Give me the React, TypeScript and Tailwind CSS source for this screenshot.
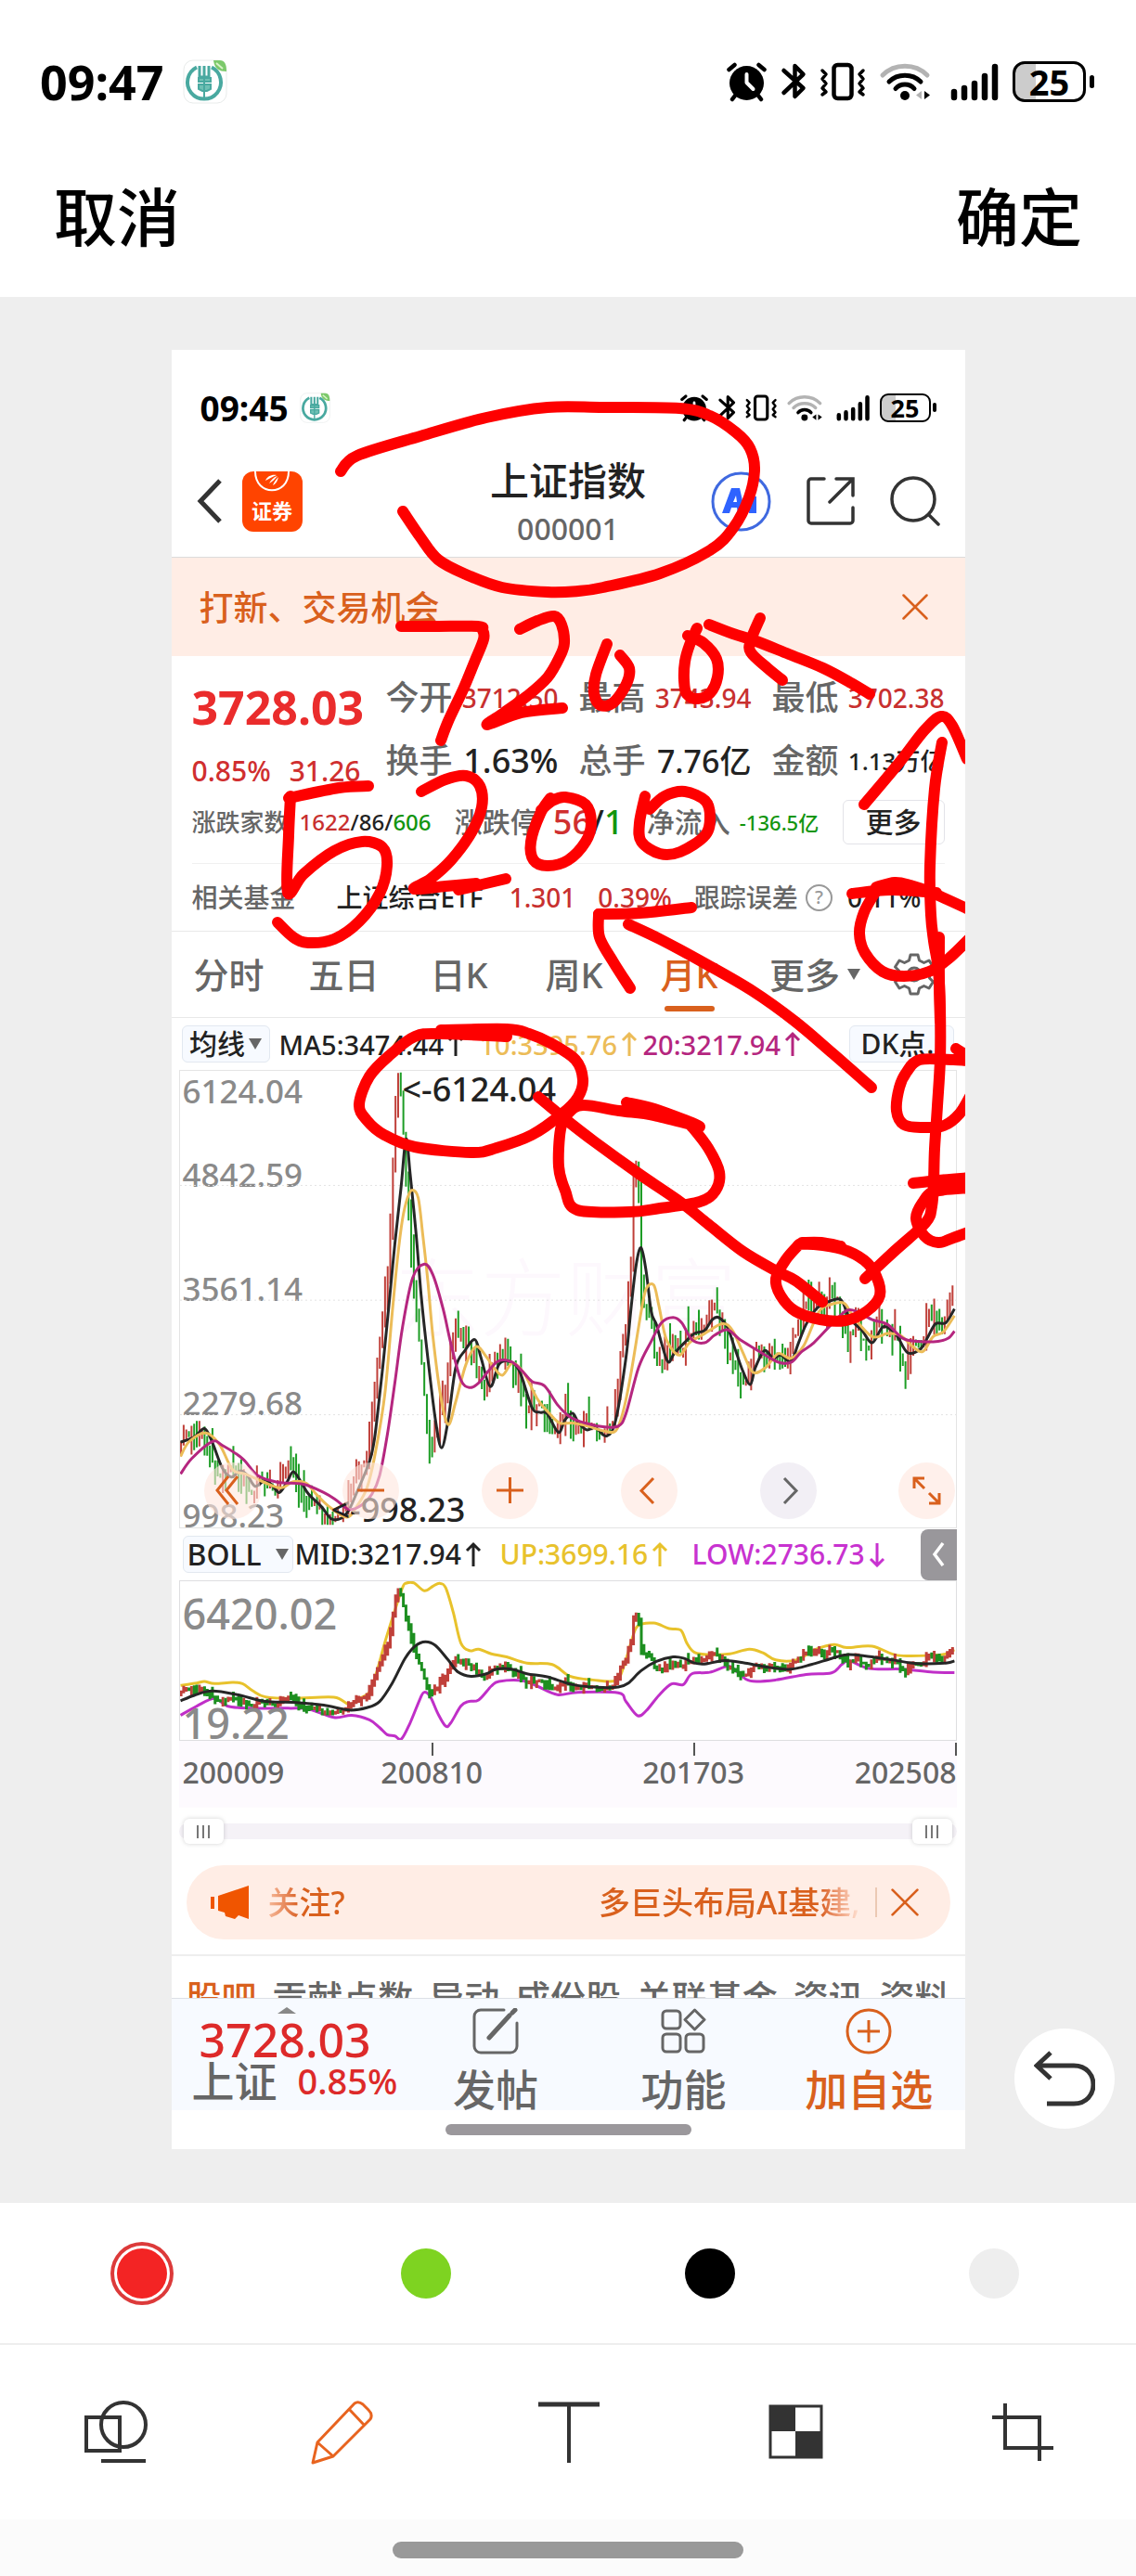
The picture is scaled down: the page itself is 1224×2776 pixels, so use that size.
import React, { useState } from "react";

type Point = [number, number];

const parse = (s: string): Point[] =>
  s.trim().split(/\s+/).map((pair) => pair.split(",").map(Number) as Point);

/* Catmull-Rom spline through the points, written as cubic segments. */
function smooth(points: Point[]): string {
  let d = `M${points[0][0]} ${points[0][1]}`;
  for (let i = 0; i < points.length - 1; i++) {
    const p0 = points[Math.max(0, i - 1)];
    const p1 = points[i];
    const p2 = points[i + 1];
    const p3 = points[Math.min(points.length - 1, i + 2)];
    d += ` C${(p1[0] + (p2[0] - p0[0]) / 6).toFixed(1)} ${(p1[1] + (p2[1] - p0[1]) / 6).toFixed(1)} ${(p2[0] - (p3[0] - p1[0]) / 6).toFixed(1)} ${(p2[1] - (p3[1] - p1[1]) / 6).toFixed(1)} ${p2[0]} ${p2[1]}`;
  }
  return d;
}

/* ---------- market data ---------- */

const PRICE = parse(
  "18,680 40,640 62,620 80,700 100,790 130,750 160,840 180,790 212,840 235,750 255,820 290,880 312,925 335,915 352,870 370,780 390,720 402,540 415,350 425,200 435,50 445,-330 449,-525 455,-525 460,-380 467,-180 475,0 485,200 500,440 514,720 530,640 545,480 560,320 580,320 600,380 618,520 638,400 660,400 685,460 710,580 730,560 762,650 778,560 800,650 820,600 855,655 875,590 890,400 905,220 913,-50 918,-250 923,-240 929,100 938,280 948,230 960,440 985,370 1010,350 1030,310 1050,300 1078,240 1090,320 1110,420 1138,500 1150,350 1175,410 1200,370 1215,430 1235,300 1260,230 1300,200 1320,210 1338,360 1355,290 1375,380 1400,270 1425,330 1450,420 1465,350 1485,380 1495,240 1520,310 1542,190",
);
const MA5 = parse(
  "18,672 45,655 65,628 80,670 100,755 118,785 135,765 150,780 165,815 185,795 200,815 213,835 228,800 240,768 255,800 270,840 295,880 315,920 335,918 350,890 365,835 390,735 400,660 410,520 418,400 430,200 440,30 452,-150 462,-310 470,-200 482,0 492,200 505,400 520,600 532,690 545,600 560,430 578,375 598,340 610,400 628,492 645,420 665,410 685,440 710,560 725,575 740,580 762,640 775,600 790,578 802,610 818,632 835,625 857,652 875,600 895,400 905,240 915,100 925,42 935,120 945,250 955,290 965,350 978,412 990,385 1010,350 1030,320 1050,310 1065,275 1078,268 1095,300 1110,370 1125,440 1140,485 1150,430 1168,375 1185,400 1200,390 1220,410 1235,350 1250,290 1270,240 1290,220 1318,210 1335,270 1360,310 1380,350 1400,300 1415,305 1430,330 1450,382 1475,370 1490,330 1505,288 1525,285 1542,240",
);
const MA10 = parse(
  "18,718 35,670 68,642 95,680 120,760 145,775 180,800 215,820 240,800 265,805 285,840 310,880 345,915 365,880 385,820 400,720 420,520 435,250 445,80 455,-50 465,-120 474,-145 486,-120 495,0 505,150 515,330 530,520 545,615 560,540 580,420 600,362 620,395 635,430 652,455 672,415 695,450 720,530 745,580 765,610 790,610 820,620 850,635 875,635 890,570 905,450 925,250 935,175 950,163 960,230 975,340 1000,390 1020,350 1050,320 1085,288 1105,310 1125,380 1145,445 1170,430 1195,385 1220,400 1245,360 1275,250 1300,225 1325,222 1345,270 1380,330 1410,320 1435,325 1460,362 1480,378 1500,330 1520,315 1542,262",
);
const MA20 = parse(
  "18,775 40,725 80,670 100,682 140,725 170,780 210,802 260,808 300,835 325,860 350,890 375,875 395,840 410,780 425,650 440,480 455,300 475,140 498,95 515,130 535,240 550,350 570,470 588,495 605,480 625,440 645,408 670,412 690,440 710,475 735,490 760,550 785,590 815,610 850,622 880,620 895,580 920,430 945,345 965,285 988,268 1005,285 1025,340 1050,350 1070,325 1095,308 1120,340 1150,370 1180,400 1200,415 1222,412 1240,380 1265,350 1300,290 1330,245 1352,250 1380,275 1410,290 1440,335 1470,345 1510,345 1530,335 1542,312",
);
const BOLL_UP = parse(
  "18,528 50,520 65,515 85,522 120,518 140,522 160,545 185,565 240,570 320,566 350,590 370,570 390,550 405,480 420,390 435,310 455,210 463,195 478,195 498,220 515,205 528,196 540,210 555,290 570,390 588,415 605,410 630,425 660,435 700,455 750,460 785,498 830,510 875,512 890,470 905,390 918,335 950,325 980,343 1003,348 1015,390 1030,420 1060,428 1100,425 1138,410 1165,422 1190,445 1230,445 1270,410 1305,395 1330,405 1380,400 1430,430 1500,430 1525,425 1542,412",
);
const BOLL_MID = parse(
  "18,578 45,560 80,546 130,558 185,580 240,583 300,592 350,608 385,600 410,580 435,520 460,440 480,400 500,386 520,398 545,445 565,485 590,498 620,490 640,475 670,475 700,490 740,500 790,525 840,534 880,533 900,520 925,480 955,450 988,435 1010,440 1030,455 1050,458 1090,447 1130,455 1180,470 1220,475 1260,460 1300,440 1330,428 1365,432 1420,445 1470,457 1525,455 1542,448",
);
const BOLL_LOW = parse(
  "18,625 50,595 85,570 110,595 150,602 230,602 270,605 320,632 355,625 390,640 410,665 425,688 440,692 453,702 470,650 490,570 498,550 510,565 525,620 540,660 550,650 570,595 585,580 605,575 630,530 645,515 690,512 720,530 760,558 800,550 880,552 895,580 918,626 935,610 960,560 985,523 1008,525 1025,490 1060,485 1097,465 1115,485 1140,513 1190,510 1250,492 1300,487 1320,460 1335,448 1375,473 1440,475 1500,485 1542,486",
);

function priceAt(x: number): number {
  for (let i = 1; i < PRICE.length; i++) {
    if (x <= PRICE[i][0]) {
      const [x0, y0] = PRICE[i - 1];
      const [x1, y1] = PRICE[i];
      return y0 + ((y1 - y0) * (x - x0)) / (x1 - x0);
    }
  }
  return PRICE[PRICE.length - 1][1];
}

const noise = (i: number) => {
  const v = Math.sin(i * 127.1 + 11.7) * 43758.5453;
  return v - Math.floor(v);
};

const CANDLES = Array.from({ length: 296 }, (_, i) => {
  const x = 19 + i * 5.15;
  const wobble = x < 400 ? 26 : 56;
  const open = priceAt(x) + (noise(i) - 0.5) * wobble;
  const close = priceAt(x + 5.15) + (noise(i + 1) - 0.5) * wobble;
  const low = Math.min(940, Math.max(open, close) + 3 + noise(i + 500) ** 3 * 80);
  const high = Math.max(-528, Math.min(open, close) - 3 - noise(i + 900) ** 3 * 80);
  return { x, open, close, low, high, up: close < open };
});
const toBoll = (v: number) => 419.5 + (v - 212) * 0.2784;

const candlePath = (up: boolean) =>
  CANDLES.filter((c) => c.up === up)
    .map((c) => `M${c.x.toFixed(1)} ${c.high.toFixed(0)}V${c.low.toFixed(0)}`)
    .join("");
const bollPath = (up: boolean) =>
  CANDLES.filter((c) => c.up === up)
    .map((c) => `M${c.x.toFixed(1)} ${(toBoll(c.high) - 3).toFixed(1)}V${(toBoll(c.low) + 3).toFixed(1)}`)
    .join("");

/* ---------- handwriting ---------- */

const STROKES: string[] = [
  "367,508 385,491 453,470 524,450 590,439 650,439 732,440 765,448 793,466 808,483 813,506 807,536 790,569 765,593 711,618 650,633 623,637 590,638 541,633 502,619 472,603 453,579 434,551",
  "432,675 470,675 515,675 520,679 521,689 511,714 499,743 483,777 475,798",
  "560,678 579,669 597,664 605,673 608,693 603,708 590,730 568,750 543,768 525,781 562,768 606,763",
  "654,694 642,727 640,747 647,760 661,757 675,737 678,720 668,706",
  "751,677 743,695 738,713 737,733 740,748 752,753 765,747 773,730 772,710 758,693 741,685",
  "764,673 790,683 815,691 850,705 887,720 917,736 937,748",
  "819,666 809,690 809,703 827,720 843,733",
  "397,847 365,849 311,860",
  "313,858 311,900 310,962 327,942 360,917 390,907 412,913 417,933 409,963 387,993 360,1012 332,1016 316,1010 299,994",
  "454,853 480,840 502,836 517,847 519,870 508,897 486,927 464,947 446,958 480,955 513,952",
  "494,959 545,947",
  "593,860 582,877 572,907 575,927 590,933 612,927 631,907 637,887 631,867 609,859 595,863 583,873",
  "695,858 689,887 691,907 711,920 733,918 760,900 765,880 760,863 738,853 716,858 700,872",
  "745,978 689,984 645,985",
  "645,985 646,1010 661,1037 679,1065",
  "677,996 711,1012 761,1039 811,1068 857,1101 897,1135 939,1172",
  "931,867 968,823 996,787 1014,772 1026,782 1042,818",
  "1015,800 1007,850 1002,933 1003,986 1006,1014 1011,1045 1013,1086 1013,1141 1010,1192 1007,1238 1006,1272 1004,1300 997,1318 964,1348 932,1378",
  "1012,1010 1012,1060 1013,1100",
  "918,963 960,959 1009,962",
  "944,956 964,951 981,954 1004,962 1046,981",
  "944,960 931,983 926,1006 932,1027 951,1047 974,1052 1001,1047 1021,1034 1046,1010",
  "1030,1130 1046,1142 1027,1142 991,1142 977,1155 969,1172 966,1197 974,1212 994,1215 1017,1213 1034,1200 1046,1180",
  "984,1275 1011,1272 1046,1269",
  "1046,1280 1007,1284 994,1296 987,1313 996,1332 1011,1339 1027,1334 1046,1327",
  "861,1341 847,1357 836,1378 841,1396 857,1413 884,1422 911,1423 934,1413 948,1396 944,1375 931,1358 907,1346 877,1341 861,1341",
  "864,1339 885,1339 906,1343",
  "580,1182 609,1206 640,1230 690,1266 734,1296 764,1320 801,1349 837,1370 857,1380 886,1403",
  "475,1110 546,1109 570,1114 595,1125 620,1142 628,1163 623,1182 606,1200 573,1223 535,1237 508,1242 447,1236 414,1223 395,1207 387,1190 398,1160 420,1137 447,1117 475,1114 546,1117",
  "675,1188 705,1195 754,1214 705,1202 667,1197 628,1191 612,1200 604,1217 602,1257 609,1283 622,1304 678,1306 711,1302 754,1295 771,1283 775,1263 763,1237 743,1211",
];

function Handwriting() {
  return (
    <svg
      aria-hidden="true"
      viewBox="185 377 855 1939"
      preserveAspectRatio="none"
      className="pointer-events-none absolute inset-0 h-full w-full"
      fill="none"
      stroke="#fe0000"
      strokeWidth="12"
      strokeLinecap="round"
      strokeLinejoin="round"
    >
      {STROKES.map((s) => (
        <path key={s} d={smooth(parse(s))} />
      ))}
    </svg>
  );
}

/* ---------- status bar ---------- */

function LeafBankIcon({ className }: { className: string }) {
  return (
    <svg viewBox="0 0 48 48" className={className} aria-hidden="true">
      <rect x="1" y="1" width="46" height="46" rx="10" fill="#fff" stroke="#e8ebea" />
      <path d="M15 8.500A18 18 0 1 0 31 8.500" fill="none" stroke="#49a9a0" strokeWidth="4" />
      <path d="M18 7v12h10V7M23 7v12" fill="none" stroke="#49a9a0" strokeWidth="3" />
      <path d="M23 20v22M17 20h13v4H17zM17 27h13v5l-4 2h-5l-4-2z" fill="#6fc0b4" stroke="#49a9a0" strokeWidth="2" />
      <path d="M33 1h7c5 0 7 4 7 12-8 0-13-3-14-12z" fill="#7cc96b" />
      <path d="M36 4l7 6" stroke="#d9f3c8" strokeWidth="2" />
    </svg>
  );
}

function SignalIcons({ className, weakWifi }: { className: string; weakWifi?: boolean }) {
  return (
    <svg viewBox="0 0 294 44" className={className} fill="none" strokeLinecap="round" strokeLinejoin="round" aria-hidden="true">
      <circle cx="21.500" cy="23.500" r="18.500" fill="#000" />
      <path d="M21.500 14v9l7 7" stroke="#fff" strokeWidth="4" />
      <path d="M2.500 9l6-5M34.500 4l6 5M9 37l-3 4M34 37l3 4" stroke="#000" strokeWidth="4.500" />
      <path d="M61.500 10l21 19-9 9V5l9 9-21 20" stroke="#000" strokeWidth="4.500" />
      <rect x="115.500" y="4" width="19" height="36" rx="4" stroke="#000" strokeWidth="4.500" />
      <path d="M103 10l4 4-4 5 4 5-4 5 4 4-4 3M147 10l-4 4 4 5-4 5 4 5-4 4 4 3" stroke="#000" strokeWidth="3.500" />
      <path d="M168 15c13-13 35-13 48 0" stroke="#b3b3b3" strokeWidth="5" />
      <path d="M175 22c9-9 25-9 34 0" stroke={weakWifi ? "#b3b3b3" : "#000"} strokeWidth="5" />
      <path d="M182 29.500c5-6 15-6 20 0" stroke="#000" strokeWidth="5" />
      <circle cx="192" cy="37" r="5" fill="#000" />
      <path d="M210 32v9l-6-4.500z" fill={weakWifi ? "#000" : "#b3b3b3"} />
      <path d="M213 32v9l6-4.500z" fill="#000" />
      <path d="M245 33v6M256 29v10M267 24v15M278 16v23M289 6v33" stroke="#000" strokeWidth="6.500" />
    </svg>
  );
}

/* ---------- small pieces ---------- */

function Arrow({ down }: { down?: boolean }) {
  return (
    <svg viewBox="0 0 18 28" className="ml-1 h-7 w-[18px] shrink-0" fill="none" stroke="currentColor" strokeWidth="3" role="img" aria-label={down ? "下跌" : "上涨"}>
      <path d={down ? "M9 2v24M2 19l7 7 7-7" : "M9 27V3M2 10l7-7 7 7"} />
    </svg>
  );
}

function Caret() {
  return (
    <svg viewBox="0 0 14 12" className="h-3 w-3.5 shrink-0" aria-hidden="true">
      <path d="M0 0h14L7 12z" fill="#666" />
    </svg>
  );
}

function Cross({ className }: { className: string }) {
  return (
    <svg viewBox="0 0 28 28" className={className} fill="none" stroke="#d9601d" strokeWidth="2.500" strokeLinecap="round" aria-hidden="true">
      <path d="M1.500 1.500l25 25M26.500 1.500l-25 25" />
    </svg>
  );
}

function Stat({ name, value, valueClass }: { name: string; value: string; valueClass: string }) {
  return (
    <div className="flex h-[68px] items-center justify-between">
      <dt className="text-4xl text-[#666]">{name}</dt>
      <dd className={valueClass}>{value}</dd>
    </div>
  );
}

const PERIODS = ["分时", "五日", "日K", "周K", "月K"];
const SECTIONS = ["股吧", "贡献点数", "异动", "成份股", "关联基金", "资讯", "资料"];

const CHART_TOOLS = [
  { label: "跳到最早", d: "M26 15L14 30l12 15M36 15L24 30l12 15" },
  { label: "缩小", d: "M16 30h29" },
  { label: "放大", d: "M16 30h29M30.500 16v28" },
  { label: "前移", d: "M35 17L22 30.500 35 44" },
  { label: "后移", d: "M26 17l13 13.500L26 44", muted: true },
  { label: "全屏", d: "M17 28V17h11M17 17l11 11M44 33v11H33M44 44L33 33" },
];

/* ---------- the stock page ---------- */

function StockHeader() {
  return (
    <header>
      <div className="flex h-[115px] items-center justify-between pt-[9px] pr-[31px] pl-[31px]">
        <div className="flex items-center gap-3">
          <span className="text-[37px] leading-none font-bold text-black">09:45</span>
          <LeafBankIcon className="size-[33px]" />
        </div>
        <div className="flex items-center gap-2.5">
          <SignalIcons className="h-[31px] w-[205px]" weakWifi />
          <div className="flex items-center gap-0.5">
            <span className="flex h-[31px] w-[55px] items-center justify-center rounded-[9px] border-2 border-black bg-linear-to-r from-[#ccc] from-30% to-white to-30% text-[27px] leading-none font-bold">25</span>
            <span className="h-2.5 w-1 rounded bg-black" />
          </div>
        </div>
      </div>
      <div className="grid h-[109px] grid-cols-[1fr_auto_1fr] items-center border-b border-[#dcdcdc] px-[27px] pb-3">
        <div className="flex items-center gap-[22px]">
          <button aria-label="返回">
            <svg viewBox="0 0 27 48" className="h-12 w-[27px]" fill="none" stroke="#333" strokeWidth="5">
              <path d="M25 2L4 24l21 22" />
            </svg>
          </button>
          <button className="relative flex size-[65px] items-end justify-center overflow-hidden rounded-xl bg-[#ff4400] pb-3 text-[22px] leading-none font-bold text-white">
            <svg viewBox="0 0 40 24" className="absolute top-0 left-3 h-6 w-10" fill="none" aria-hidden="true">
              <path d="M2 0c0 27 36 27 36 0" stroke="#fff" strokeWidth="2" />
              <path d="M13 10c2-5 7-7 12-6-5 2-8 4-12 6zM17 13c2-4 5-7 9-8-3 3-5 6-9 8zM21 15c1-3 3-6 6-9-1 4-2 7-6 9z" fill="#fff" />
            </svg>
            证券
          </button>
        </div>
        <h1 className="-my-4 pt-2 text-center text-[42px] leading-[52px] font-medium text-[#222]">
          上证指数
          <span className="block text-[32px] text-[#666]">000001</span>
        </h1>
        <div className="flex items-center justify-end gap-[38px]">
          <button aria-label="AI 助手">
            <svg viewBox="0 0 65 65" className="size-[65px]" fill="none">
              <circle cx="32.500" cy="32.500" r="30.500" stroke="#3f69e0" strokeWidth="3" />
              <path d="M12 45l10-27h9l6 27h-8l-1-6h-6l-2 6zM24 33h4l-1-7z" fill="#2f63ff" fillRule="evenodd" />
              <path d="M45 27v18M45 18v4" stroke="#2f63ff" strokeWidth="8" />
            </svg>
          </button>
          <button aria-label="分享">
            <svg viewBox="0 0 52 52" className="size-[52px]" fill="none" stroke="#333" strokeWidth="3.500" strokeLinecap="round">
              <path d="M19 2H5a3 3 0 0 0-3 3v42a3 3 0 0 0 3 3h42a3 3 0 0 0 3-3V33M32 2h18v18M50 2L25 27" />
            </svg>
          </button>
          <button aria-label="搜索">
            <svg viewBox="0 0 54 54" className="size-[54px]" fill="none" stroke="#333" strokeWidth="3.500" strokeLinecap="round">
              <circle cx="25" cy="25" r="23" />
              <path d="M42 42l10 10" />
            </svg>
          </button>
        </div>
      </div>
    </header>
  );
}

function Quote() {
  return (
    <section className="border-b border-[#e8e8e8]">
      <div className="px-[22px]">
        <div className="grid grid-cols-[209px_1fr]">
          <div className="pt-[23px]">
            <p className="text-[50px] leading-[64px] font-bold text-[#ea2c2c]">3728.03</p>
            <p className="mt-1.5 flex gap-5 text-[30px] leading-[62px] text-[#d02f2f]">
              <span>0.85%</span>
              <span>31.26</span>
            </p>
          </div>
          <dl className="grid grid-cols-3 content-start gap-x-[22px] pt-[11px] leading-none">
            <Stat name="今开" value="3712.50" valueClass="text-[28px] text-[#c8302f]" />
            <Stat name="最高" value="3743.94" valueClass="text-[28px] text-[#c8302f]" />
            <Stat name="最低" value="3702.38" valueClass="text-[28px] text-[#c8302f]" />
            <Stat name="换手" value="1.63%" valueClass="text-4xl text-[#222]" />
            <Stat name="总手" value="7.76亿" valueClass="text-[34px] text-[#222]" />
            <Stat name="金额" value="1.13万亿" valueClass="text-[26px] text-[#222]" />
          </dl>
        </div>
        <div className="flex h-12 items-center justify-between leading-none whitespace-nowrap">
          <p className="flex items-center gap-3">
            <span className="text-[26px] text-[#666]">涨跌家数</span>
            <span className="text-2xl text-[#222]">
              <span className="text-[#c8302f]">1622</span>/86/<span className="text-[#12950f]">606</span>
            </span>
          </p>
          <p className="flex items-center gap-4">
            <span className="text-[30px] text-[#666]">涨跌停</span>
            <span className="text-4xl text-[#222]">
              <span className="text-[#d02f2f]">56</span>/<span className="text-[#12950f]">1</span>
            </span>
          </p>
          <p className="flex items-center gap-2.5">
            <span className="text-[30px] text-[#666]">净流入</span>
            <span className="text-[22px] text-[#12950f]">-136.5亿</span>
          </p>
          <button className="h-12 w-[110px] rounded-md border border-[#e3e3e8] text-[30px] text-[#222]">更多</button>
        </div>
        <div className="mt-5 flex h-[73px] items-center border-t border-[#f0f0f0] text-[28px] leading-none whitespace-nowrap">
          <span className="text-[#666]">相关基金</span>
          <a href="#etf" className="ml-11 text-[#222]">上证综合ETF</a>
          <span className="ml-7 text-[#c8302f]">1.301</span>
          <span className="ml-6 text-[#c8302f]">0.39%</span>
          <span className="ml-6 text-[#666]">跟踪误差</span>
          <button aria-label="说明" className="ml-2 flex size-[29px] items-center justify-center rounded-full border-2 border-[#999] text-xl leading-none text-[#999]">?</button>
          <span className="ml-4 text-[#222]">0.11%</span>
        </div>
      </div>
    </section>
  );
}

function PeriodTabs() {
  const [active, setActive] = useState("月K");
  return (
    <nav className="grid h-[93px] grid-cols-[repeat(5,124fr)_147fr_88fr] border-b border-[#e8e8e8] text-[38px] leading-none text-[#666]">
      {PERIODS.map((p) => (
        <button
          key={p}
          onClick={() => setActive(p)}
          className={p === active ? "relative text-[#d9601d]" : "relative"}
        >
          {p}
          {p === active && <span className="absolute bottom-1.5 left-1/2 h-1.5 w-[54px] -translate-x-1/2 rounded-full bg-[#d9601d]" />}
        </button>
      ))}
      <button className="flex items-center justify-center gap-2">
        更多
        <Caret />
      </button>
      <button aria-label="设置" className="flex items-center justify-center pr-[22px]">
        <svg viewBox="0 0 46 46" className="size-[46px]" fill="none" stroke="#666" strokeWidth="3">
          <path d="M19 2h8l1.500 6 5 2.500L39 8l4.500 7-4 4v8l4 4L39 38l-5.500-2.500-5 2.500L27 44h-8l-1.500-6-5-2.500L7 38l-4.500-7 4-4v-8l-4-4L7 8l5.500 2.500 5-2.500z" strokeLinejoin="round" />
          <circle cx="23" cy="23" r="7" />
        </svg>
      </button>
    </nav>
  );
}

function CandleChart() {
  return (
    <div className="relative mr-[9px] ml-2 h-[494px] border border-[#e4e4e4] text-[35px] leading-none text-[#8a8a8a]">
      <span aria-hidden="true" className="absolute top-[198px] left-[232px] text-[92px] font-light text-[#fdf8fd]">东方财富</span>
      <span className="absolute top-1 left-[3px]">6124.04</span>
      <span className="absolute top-[94px] left-[3px]">4842.59</span>
      <span className="absolute top-[217px] left-[3px]">3561.14</span>
      <span className="absolute top-[340px] left-[3px]">2279.68</span>
      <span className="absolute -bottom-1 left-[3px]">998.23</span>
      <svg viewBox="17 -531 1528 1479" preserveAspectRatio="none" className="absolute inset-0 h-full w-full" fill="none" role="img" aria-label="上证指数月K线">
        <path d="M17 -160H1545M17 212H1545M17 583H1545" stroke="#e2e2e2" strokeDasharray="2 3" vectorEffect="non-scaling-stroke" />
        <path d={candlePath(true)} stroke="#c0403a" strokeWidth="2" vectorEffect="non-scaling-stroke" />
        <path d={candlePath(false)} stroke="#1d9d25" strokeWidth="2" vectorEffect="non-scaling-stroke" />
        <path d={smooth(MA5)} stroke="#262626" strokeWidth="3" vectorEffect="non-scaling-stroke" />
        <path d={smooth(MA10)} stroke="#ecbc58" strokeWidth="3" vectorEffect="non-scaling-stroke" />
        <path d={smooth(MA20)} stroke="#b5267f" strokeWidth="3" vectorEffect="non-scaling-stroke" />
      </svg>
      <span className="absolute top-0.5 left-[240px] text-4xl leading-none text-[#222]">&lt;-6124.04</span>
      <span className="absolute bottom-px left-[163px] text-4xl leading-none text-[#222]">&lt;-998.23</span>
      <div className="absolute right-0 bottom-[9px] left-[26px] flex justify-between">
        {CHART_TOOLS.map((t) => (
          <button
            key={t.label}
            aria-label={t.label}
            className={t.muted ? "size-[61px] rounded-full bg-[#efebf3]/80 text-[#666]" : "size-[61px] rounded-full bg-[#ffe6dd]/60 text-[#d9601d]"}
          >
            <svg viewBox="0 0 61 61" className="size-full" fill="none" stroke="currentColor" strokeWidth="3">
              <path d={t.d} />
            </svg>
          </button>
        ))}
      </div>
    </div>
  );
}

function BollChart() {
  return (
    <div>
      <div className="relative mr-[9px] ml-2 h-[173px] border border-[#dedee0] text-[45px] leading-none text-[#8a8a8a]">
        <svg viewBox="17 189 1528 516" preserveAspectRatio="none" className="absolute inset-0 h-full w-full" fill="none" role="img" aria-label="BOLL指标">
          <path d={smooth(BOLL_UP)} stroke="#e8c22c" strokeWidth="3" vectorEffect="non-scaling-stroke" />
          <path d={smooth(BOLL_LOW)} stroke="#c02fc8" strokeWidth="3" vectorEffect="non-scaling-stroke" />
          <path d={bollPath(true)} stroke="#c0403a" strokeWidth="3" vectorEffect="non-scaling-stroke" />
          <path d={bollPath(false)} stroke="#1d8f20" strokeWidth="3" vectorEffect="non-scaling-stroke" />
          <path d={smooth(BOLL_MID)} stroke="#262626" strokeWidth="3" vectorEffect="non-scaling-stroke" />
        </svg>
        <span className="absolute top-3 left-[3px]">6420.02</span>
        <span className="absolute -bottom-1 left-[3px]">19.22</span>
      </div>
      <div className="mr-[9px] ml-2 bg-[#fdfafe] pt-0.5 pb-5">
        <svg viewBox="0 0 838 14" preserveAspectRatio="none" className="h-3.5 w-full" aria-hidden="true">
          <path d="M273 0v14M555 0v14M837 0v14" stroke="#555" strokeWidth="2" />
        </svg>
        <div className="flex pl-1 text-[32px] leading-[36px] text-[#666]">
          <span>200009</span>
          <span className="ml-[104px]">200810</span>
          <span className="ml-[172px]">201703</span>
          <span className="ml-auto">202508</span>
        </div>
      </div>
    </div>
  );
}

function Grip({ label, value }: { label: string; value: number }) {
  return (
    <span className="relative flex h-[27px] w-[43px] items-center justify-center gap-1 rounded-md bg-white shadow-[0_0_5px_rgba(0,0,0,0.18)]">
      <span className="h-3.5 w-0.5 bg-[#777]" />
      <span className="h-3.5 w-0.5 bg-[#777]" />
      <span className="h-3.5 w-0.5 bg-[#777]" />
      <input type="range" aria-label={label} defaultValue={value} className="absolute inset-0 h-full w-full opacity-0" />
    </span>
  );
}

function StockPage() {
  return (
    <article className="relative mx-auto w-full max-w-[855px] overflow-hidden bg-white font-medium">
      <StockHeader />
      <div className="flex h-[106px] items-center justify-between bg-[#ffede5] pr-10 pl-[30px] text-[37px] leading-none text-[#d9601d]">
        <a href="#ipo">打新、交易机会</a>
        <button aria-label="关闭提示">
          <Cross className="size-7" />
        </button>
      </div>
      <Quote />
      <PeriodTabs />
      <div className="flex h-14 items-center pr-3 pl-[11px] text-[29px] leading-none whitespace-nowrap text-[#222]">
        <button className="flex h-10 w-[95px] items-center justify-center gap-1 rounded-md border border-[#e2e8f0] bg-[#f7faff] text-[30px]">
          均线
          <Caret />
        </button>
        <span className="ml-2.5 flex w-[206px] items-center">MA5:3474.44<Arrow /></span>
        <span className="ml-2.5 flex w-[168px] items-center text-[#ecbc58]">10:3395.76<Arrow /></span>
        <span className="ml-2 flex items-center text-[#b5267f]">20:3217.94<Arrow /></span>
        <button className="ml-auto h-10 w-[113px] rounded-md border border-[#e2e8f0] bg-[#f7faff] pr-2 text-[30px]">DK点.</button>
      </div>
      <CandleChart />
      <div className="flex h-14 items-center pr-[9px] pl-3 text-[30px] leading-none whitespace-nowrap text-[#222]">
        <button className="flex h-10 w-[119px] items-center justify-between rounded-md border border-[#e2e8f0] bg-[#f7faff] px-1 text-[32px]">
          BOLL
          <Caret />
        </button>
        <span className="ml-0.5 flex w-[207px] items-center">MID:3217.94<Arrow /></span>
        <span className="ml-3.5 flex w-[193px] items-center text-[#e8c22c]">UP:3699.16<Arrow /></span>
        <span className="ml-3.5 flex items-center text-[#c832d0]">LOW:2736.73<Arrow down /></span>
        <button aria-label="展开指标" className="ml-auto flex h-[55px] w-[39px] items-center justify-center rounded-l-lg bg-[#99979b]">
          <svg viewBox="0 0 14 26" className="h-[26px] w-3.5" fill="none" stroke="#fff" strokeWidth="3.500">
            <path d="M12 1L3 13l9 12" />
          </svg>
        </button>
      </div>
      <BollChart />
      <div className="relative mt-3 mr-[9px] ml-2 flex h-[27px] items-center justify-between px-[5px]">
        <span className="absolute inset-x-0 top-[5px] h-[17px] rounded-full bg-[#f5f2f7]" />
        <Grip label="起始时间" value={0} />
        <Grip label="结束时间" value={100} />
      </div>
      <div className="px-4 pt-[23px] pb-4">
        <div className="flex h-20 items-center rounded-full bg-[#ffede5] pr-[34px] pl-[26px] text-[34px] leading-none whitespace-nowrap text-[#d9601d]">
          <svg viewBox="0 0 41 36" className="h-9 w-[41px]" fill="#f05500" aria-hidden="true">
            <path d="M0 12h4v13H0zM8 11L41 0v36l-11-4-4 4-10-3-1-4-7-2z" />
          </svg>
          <span className="ml-[21px] bg-linear-to-r from-[#f5b898] to-[#d9601d] to-40% bg-clip-text text-transparent">关注?</span>
          <span className="ml-auto bg-linear-to-r from-[#d9601d] from-85% to-[#ffe5d8] bg-clip-text text-transparent">多巨头布局AI基建,</span>
          <span className="mr-[15px] ml-4 h-8 w-0.5 bg-[#ecc9b4]" />
          <button aria-label="关闭公告">
            <Cross className="size-[30px]" />
          </button>
        </div>
      </div>
      <nav className="flex h-[47px] justify-between overflow-hidden border-t-2 border-[#eee] px-4 pt-[25px] text-[38px] leading-none whitespace-nowrap text-[#666]">
        {SECTIONS.map((s, i) => (
          <a key={s} href={`#section-${i}`} className={i === 0 ? "text-[#d9601d]" : ""}>
            {s}
          </a>
        ))}
      </nav>
      <footer>
        <div className="grid h-[121px] grid-cols-[242fr_212fr_194fr_207fr] border-t border-[#dde0e6] bg-[#f7faff] leading-none whitespace-nowrap text-[#666]">
          <button className="flex flex-col justify-end pb-2.5 pl-[22px] text-left text-[#dd2a2a]">
            <svg viewBox="0 0 20 7" className="mb-1.5 ml-[92px] h-[7px] w-5" aria-hidden="true">
              <path d="M10 0l10 7H0z" fill="#888" />
            </svg>
            <span className="pl-2 text-[50px] leading-[44px]">3728.03</span>
            <span className="flex h-11 items-center gap-[22px] text-[38px]">
              <span className="text-[46px] text-[#666]">上证</span>0.85%
            </span>
          </button>
          <button className="flex flex-col items-center justify-between pt-2.5 text-[46px]">
            <svg viewBox="0 0 50 50" className="size-[50px]" fill="none" stroke="#666" strokeWidth="3" strokeLinecap="round">
              <path d="M34 2H9a7 7 0 0 0-7 7v32a7 7 0 0 0 7 7h32a7 7 0 0 0 7-7V16" />
              <path d="M18 32L40 8M43 5l3-3" strokeWidth="5" />
            </svg>
            发帖
          </button>
          <button className="flex flex-col items-center justify-between pt-2.5 text-[46px]">
            <svg viewBox="0 0 50 50" className="size-[50px]" fill="none" stroke="#666" strokeWidth="3">
              <rect x="3" y="3" width="19" height="19" rx="4" />
              <rect x="3" y="28" width="19" height="19" rx="4" />
              <rect x="28" y="28" width="19" height="19" rx="4" />
              <path d="M37.500 2L48 12.500 37.500 23 27 12.500z" strokeLinejoin="round" />
            </svg>
            功能
          </button>
          <button className="flex flex-col items-center justify-between pt-2.5 text-[46px] text-[#d9601d]">
            <svg viewBox="0 0 50 50" className="size-[50px]" fill="none" stroke="currentColor" strokeWidth="3">
              <circle cx="25" cy="25" r="23" />
              <path d="M13 25h24M25 13v24" />
            </svg>
            加自选
          </button>
        </div>
        <div className="flex h-[42px] items-center justify-center">
          <span className="h-3 w-[265px] rounded-full bg-[#9b989c]" />
        </div>
      </footer>
      <Handwriting />
    </article>
  );
}

/* ---------- editor ---------- */

const COLOURS = [
  { name: "红色", className: "bg-[#f32424] checked:ring-[#dc3a3a]" },
  { name: "绿色", className: "bg-[#7ed321] checked:ring-[#7ed321]" },
  { name: "黑色", className: "bg-black checked:ring-black" },
  { name: "浅灰", className: "bg-[#eeeeee] checked:ring-[#ccc]" },
];

const TOOLS: { name: string; icon: React.ReactNode }[] = [
  {
    name: "形状",
    icon: (
      <>
        <path d="M2 19h36v36H2z" strokeWidth="4" />
        <circle cx="42" cy="27" r="24" strokeWidth="4" />
        <path d="M18 66h48" strokeWidth="4" />
      </>
    ),
  },
  {
    name: "画笔",
    icon: (
      <g stroke="#e8641f" strokeLinejoin="round">
        <path d="M2 68L7 46 47 4q4-3 9 1l6 6q5 5 2 10L24 61zM41 10l16 17M7 46l17 15" />
      </g>
    ),
  },
  {
    name: "文字",
    icon: (
      <>
        <path d="M1 5h66" strokeWidth="5" />
        <path d="M34 5v63" strokeWidth="4" />
      </>
    ),
  },
  {
    name: "马赛克",
    icon: (
      <>
        <path d="M7 7h55v55H7z" />
        <path d="M6 6h28v28H6zM34 34h29v29H34z" fill="#333" stroke="none" />
      </>
    ),
  },
  {
    name: "裁剪",
    icon: (
      <>
        <path d="M16 4v48h52" strokeWidth="4" />
        <path d="M2 19h51v47" strokeWidth="4" />
      </>
    ),
  },
];

export default function App() {
  return (
    <div className="bg-white font-['Noto_Sans','Noto_Sans_CJK_SC',sans-serif]">
      <header>
        <div className="flex h-36 items-center justify-between pt-8 pr-[45px] pl-[43px]">
          <div className="flex items-center gap-5">
            <span className="text-[52px] leading-none font-bold text-black">09:47</span>
            <LeafBankIcon className="size-12" />
          </div>
          <div className="flex items-center gap-3.5">
            <SignalIcons className="h-11 w-[294px]" />
            <div className="flex items-center gap-1">
              <span className="flex h-11 w-[79px] items-center justify-center rounded-[13px] border-[3px] border-black bg-linear-to-r from-[#ccc] from-30% to-white to-30% text-[38px] leading-none font-bold">25</span>
              <span className="h-3.5 w-[5px] rounded bg-black" />
            </div>
          </div>
        </div>
        <div className="flex h-44 items-center justify-between px-[58px] pt-1 text-[68px] leading-none font-medium text-black">
          <button>取消</button>
          <button>确定</button>
        </div>
      </header>

      <main className="relative bg-[#eeeeee] pt-[57px] pb-[58px]">
        <StockPage />
        <button aria-label="撤销" className="absolute right-[23px] bottom-20 flex size-[108px] items-center justify-center rounded-full bg-white">
          <svg viewBox="0 0 66 60" className="h-[60px] w-[66px]" fill="none" stroke="#333" strokeWidth="5">
            <path d="M18 2L3 16l15 14M3 16h40c28 0 28 41 0 41H14" />
          </svg>
        </button>
      </main>

      <fieldset className="grid h-[153px] grid-cols-4 place-items-center border-b-2 border-[#eeeeee]">
        {COLOURS.map((c, i) => (
          <input
            key={c.name}
            type="radio"
            name="colour"
            aria-label={c.name}
            defaultChecked={i === 0}
            className={`size-[54px] appearance-none rounded-full checked:ring-[4px] checked:ring-offset-[3px] ${c.className}`}
          />
        ))}
      </fieldset>
      <div className="grid h-[188px] grid-cols-5 place-items-center pl-1">
        {TOOLS.map((t) => (
          <button key={t.name} aria-label={t.name}>
            <svg viewBox="0 0 70 70" className="size-[70px]" fill="none" stroke="#333" strokeWidth="3">
              {t.icon}
            </svg>
          </button>
        ))}
      </div>
      <div className="flex h-[61px] items-center justify-center bg-[#fbfbfb] pt-1">
        <span className="h-[18px] w-[378px] rounded-full bg-[#999]" />
      </div>
    </div>
  );
}
